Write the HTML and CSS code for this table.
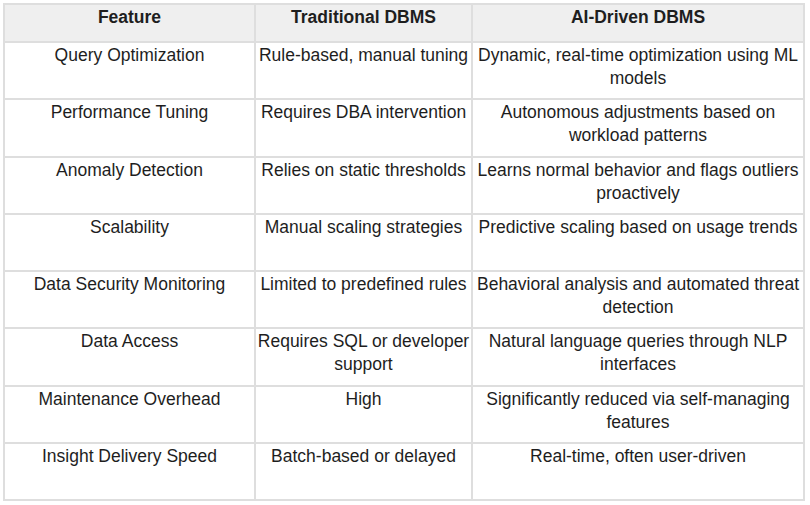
FILE: index.html
```html
<!DOCTYPE html>
<html>
<head>
<meta charset="utf-8">
<link rel="stylesheet" href="styles.css">
</head>
<body>
<table class="cmp">
  <colgroup>
    <col class="c1">
    <col class="c2">
    <col class="c3">
  </colgroup>
  <thead>
    <tr class="head-row">
      <th>Feature</th>
      <th>Traditional DBMS</th>
      <th>AI-Driven DBMS</th>
    </tr>
  </thead>
  <tbody>
    <tr><td>Query Optimization</td><td>Rule-based, manual tuning</td><td>Dynamic, real-time optimization using ML models</td></tr>
    <tr><td>Performance Tuning</td><td>Requires DBA intervention</td><td>Autonomous adjustments based on workload patterns</td></tr>
    <tr><td>Anomaly Detection</td><td>Relies on static thresholds</td><td>Learns normal behavior and flags outliers proactively</td></tr>
    <tr><td>Scalability</td><td>Manual scaling strategies</td><td>Predictive scaling based on usage trends</td></tr>
    <tr><td>Data Security Monitoring</td><td>Limited to predefined rules</td><td>Behavioral analysis and automated threat detection</td></tr>
    <tr><td>Data Access</td><td>Requires SQL or developer support</td><td>Natural language queries through NLP interfaces</td></tr>
    <tr><td>Maintenance Overhead</td><td>High</td><td>Significantly reduced via self-managing features</td></tr>
    <tr><td>Insight Delivery Speed</td><td>Batch-based or delayed</td><td>Real-time, often user-driven</td></tr>
  </tbody>
</table>
</body>
</html>
```
FILE: styles.css
```css
html, body {
  margin: 0;
  padding: 0;
  background: #ffffff;
}
body {
  padding: 3px 0 0 3px;
  font-family: "Liberation Sans", Arial, sans-serif;
  font-size: 17.5px;
  color: #1e1e1e;
}
.cmp {
  border-collapse: collapse;
  table-layout: fixed;
  width: 800px;
}
.c1 { width: 251px; }
.c2 { width: 217px; }
.c3 { width: 332px; }
.cmp th,
.cmp td {
  border: 2px solid #dedede;
  padding: 1px 0 0 0;
  text-align: center;
  vertical-align: top;
  line-height: 23px;
  box-sizing: border-box;
}
.cmp th {
  background: #efefef;
  font-weight: bold;
  height: 38px;
}
.cmp td {
  height: 57.25px;
}
```
